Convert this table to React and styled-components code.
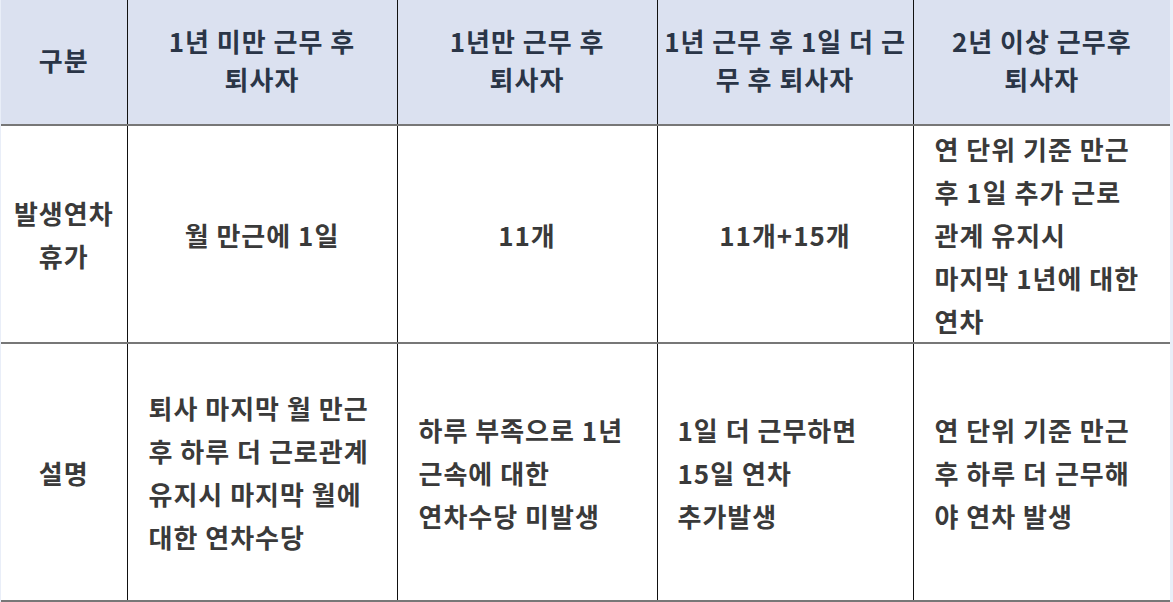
import React from "react";
import styled, { createGlobalStyle } from "styled-components";

const Global = createGlobalStyle`
  html, body { margin: 0; padding: 0; background: #e9eef8; }
  body { font-family: "Noto Sans CJK KR", "Noto Sans", sans-serif; }
`;

const Page = styled.div`
  padding: 0 3px 0 1px;
  width: 1173px;
  box-sizing: border-box;
`;

const Table = styled.table`
  width: 1169px;
  border-collapse: collapse;
  table-layout: fixed;
  background: #ffffff;
`;

const HeadRow = styled.tr`
  height: 125px;
  background: #dbe1f0;
`;

const Row = styled.tr`
  height: ${(p) => p.$h}px;
`;

const Th = styled.th`
  font-size: 26px;
  font-weight: 700;
  color: #2a3547;
  line-height: 38px;
  text-align: center;
  vertical-align: middle;
  padding: 0 2px 4px;
  border-left: 1px solid #111;
  border-right: 1px solid #111;
  border-bottom: 2px solid #777;
  letter-spacing: 1px;
  white-space: nowrap;
  &:first-child { border-left: none; }
  &:last-child { border-right: none; }
`;

const Td = styled.td`
  font-size: 26px;
  font-weight: 700;
  color: #3a3a3a;
  line-height: 43px;
  text-align: ${(p) => (p.$left ? "left" : "center")};
  vertical-align: middle;
  padding: ${(p) => (p.$left ? `0 2px 0 ${p.$pl || 21}px` : "0 2px")};
  border-left: 1px solid #111;
  border-right: 1px solid #111;
  border-bottom: 2px solid #777;
  letter-spacing: 1px;
  white-space: nowrap;
  &:first-child { border-left: none; }
  &:last-child { border-right: none; }
`;

const Lines = ({ lines }) =>
  lines.map((l, i) => (
    <React.Fragment key={i}>
      {l}
      {i < lines.length - 1 && <br />}
    </React.Fragment>
  ));

export default function App() {
  return (
    <Page>
      <Global />
      <Table>
        <colgroup>
          <col style={{ width: 126 }} />
          <col style={{ width: 270 }} />
          <col style={{ width: 260 }} />
          <col style={{ width: 256 }} />
          <col style={{ width: 257 }} />
        </colgroup>
        <thead>
          <HeadRow>
            <Th>구분</Th>
            <Th><Lines lines={["1년 미만 근무 후", "퇴사자"]} /></Th>
            <Th><Lines lines={["1년만 근무 후", "퇴사자"]} /></Th>
            <Th><Lines lines={["1년 근무 후 1일 더 근", "무 후 퇴사자"]} /></Th>
            <Th><Lines lines={["2년 이상 근무후", "퇴사자"]} /></Th>
          </HeadRow>
        </thead>
        <tbody>
          <Row $h={218}>
            <Td><Lines lines={["발생연차", "휴가"]} /></Td>
            <Td>월 만근에 1일</Td>
            <Td>11개</Td>
            <Td>11개+15개</Td>
            <Td $left>
              <Lines lines={["연 단위 기준 만근", "후 1일 추가 근로", "관계 유지시", "마지막 1년에 대한", "연차"]} />
            </Td>
          </Row>
          <Row $h={258}>
            <Td>설명</Td>
            <Td $left>
              <Lines lines={["퇴사 마지막 월 만근", "후 하루 더 근로관계", "유지시 마지막 월에", "대한 연차수당"]} />
            </Td>
            <Td $left>
              <Lines lines={["하루 부족으로 1년", "근속에 대한", "연차수당 미발생"]} />
            </Td>
            <Td $left $pl={20}>
              <Lines lines={["1일 더 근무하면", "15일 연차", "추가발생"]} />
            </Td>
            <Td $left>
              <Lines lines={["연 단위 기준 만근", "후 하루 더 근무해", "야 연차 발생"]} />
            </Td>
          </Row>
        </tbody>
      </Table>
    </Page>
  );
}
